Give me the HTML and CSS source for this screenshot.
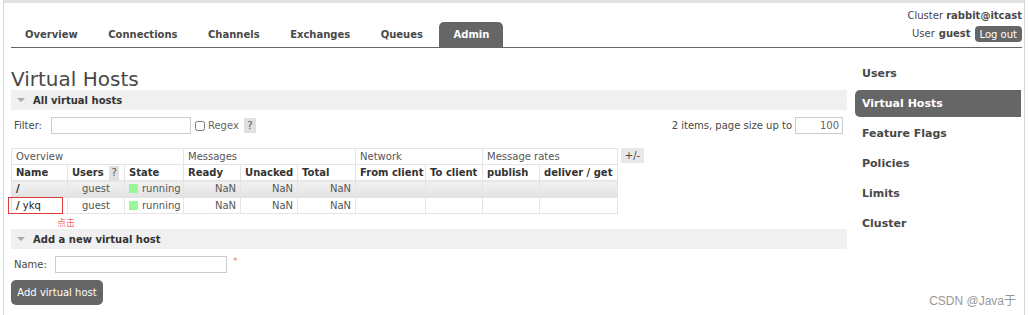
FILE: index.html
```html
<!DOCTYPE html>
<html lang="en">
<head>
    <meta charset="UTF-8">
    <title>RabbitMQ Management - Virtual Hosts</title>
    <link rel="stylesheet" href="styles.css">
</head>
<body>
    <div class="frame">
        <div class="header">
            <ul class="tabs">
                <li><a href="#">Overview</a></li>
                <li><a href="#">Connections</a></li>
                <li><a href="#">Channels</a></li>
                <li><a href="#">Exchanges</a></li>
                <li><a href="#">Queues</a></li>
                <li class="selected"><a href="#">Admin</a></li>
            </ul>
            <div class="login">
                <p>Cluster <b>rabbit@itcast</b></p>
                <p class="user">User <b>guest</b> <button class="logout">Log out</button></p>
            </div>
        </div>

        <div class="main">
            <div class="content">
                <h1>Virtual Hosts</h1>

                <div class="section">
                    <h2><span class="arrow"></span>All virtual hosts</h2>
                    <div class="filter-row">
                        <label class="filter-label">Filter:</label>
                        <input type="text" class="filter-input">
                        <input type="checkbox" class="regex-box">
                        <span class="regex-label">Regex</span>
                        <span class="help">?</span>
                        <span class="spacer"></span>
                        <span class="page-info">2 items, page size up to</span>
                        <input type="text" class="page-size" value="100">
                    </div>

                    <div class="table-wrap">
                        <table class="list">
                            <colgroup>
                                <col class="c-name"><col class="c-users"><col class="c-state">
                                <col class="c-ready"><col class="c-unacked"><col class="c-total">
                                <col class="c-from"><col class="c-to">
                                <col class="c-publish"><col class="c-deliver">
                            </colgroup>
                            <thead>
                                <tr class="group">
                                    <th colspan="3">Overview</th>
                                    <th colspan="3">Messages</th>
                                    <th colspan="2">Network</th>
                                    <th colspan="2">Message rates</th>
                                </tr>
                                <tr class="cols">
                                    <th>Name</th>
                                    <th>Users <span class="help">?</span></th>
                                    <th>State</th>
                                    <th>Ready</th>
                                    <th>Unacked</th>
                                    <th>Total</th>
                                    <th>From client</th>
                                    <th>To client</th>
                                    <th>publish</th>
                                    <th>deliver / get</th>
                                </tr>
                            </thead>
                            <tbody>
                                <tr class="alt">
                                    <td class="name"><b>/</b></td>
                                    <td class="c">guest</td>
                                    <td><span class="dot"></span>running</td>
                                    <td class="r">NaN</td>
                                    <td class="r">NaN</td>
                                    <td class="r">NaN</td>
                                    <td></td><td></td><td></td><td></td>
                                </tr>
                                <tr>
                                    <td class="name"><b>/</b> ykq</td>
                                    <td class="c">guest</td>
                                    <td><span class="dot"></span>running</td>
                                    <td class="r">NaN</td>
                                    <td class="r">NaN</td>
                                    <td class="r">NaN</td>
                                    <td></td><td></td><td></td><td></td>
                                </tr>
                            </tbody>
                        </table>
                        <span class="toggle">+/-</span>
                        <span class="mark-box"></span>
                        <span class="mark-text">点击</span>
                    </div>
                </div>

                <div class="section add">
                    <h2><span class="arrow"></span>Add a new virtual host</h2>
                    <div class="name-row">
                        <label class="filter-label">Name:</label>
                        <input type="text" class="name-input">
                        <span class="req">*</span>
                    </div>
                    <button class="add-btn">Add virtual host</button>
                </div>
            </div>

            <ul class="sidebar">
                <li><a href="#">Users</a></li>
                <li class="selected"><a href="#">Virtual Hosts</a></li>
                <li><a href="#">Feature Flags</a></li>
                <li><a href="#">Policies</a></li>
                <li><a href="#">Limits</a></li>
                <li><a href="#">Cluster</a></li>
            </ul>
        </div>

        <div class="watermark">CSDN @Java于</div>
    </div>
</body>
</html>
```

FILE: styles.css
```css
body {
    margin: 0;
    font-family: "DejaVu Sans", Verdana, sans-serif;
    font-size: 10px;
    color: #484848;
    background: white;
    overflow: hidden;
}
.frame {
    position: relative;
    margin-left: 3px;
    width: 1020px;
    height: 312px;
    border-top: 3px solid #e0e0e0;
    border-left: 1px solid #d4d4d4;
    border-right: 1px solid #d4d4d4;
}
.header {
    display: flex;
    justify-content: space-between;
    align-items: flex-end;
    margin: 0 2px 0 7px;
    padding-top: 6px;
    border-bottom: 1px solid #666;
}
.tabs {
    display: flex;
    gap: 3px;
    margin: 0;
    padding: 0;
    list-style: none;
}
.tabs a {
    display: block;
    padding: 0 13.5px 0 14px;
    height: 25px;
    line-height: 26px;
    font-weight: bold;
    color: #484848;
    text-decoration: none;
    border-radius: 5px 5px 0 0;
}
.tabs .selected a {
    background: #666;
    color: white;
}
.login {
    text-align: right;
    margin-bottom: 5px;
}
.login p {
    margin: 0;
    line-height: 14px;
}
.login .user {
    display: flex;
    justify-content: flex-end;
    align-items: center;
    gap: 4px;
    margin-top: 3px;
}
.logout {
    height: 16px;
    padding: 0 5px;
    border: none;
    border-radius: 4px;
    background: #666;
    color: white;
    font-family: inherit;
    font-size: 10px;
}
.main {
    display: flex;
    gap: 8px;
    margin: 0 2px 0 7px;
}
.content {
    width: 836px;
}
h1 {
    margin: 20px 0 0;
    font-size: 20px;
    font-weight: normal;
    line-height: 22px;
    color: #484848;
}
h2 {
    display: flex;
    align-items: center;
    margin: 0;
    height: 20px;
    background: #f0f0f0;
    font-size: 10px;
    font-weight: bold;
    color: #333;
}
.arrow {
    width: 0;
    height: 0;
    margin: 0 8px 0 6px;
    border-left: 4px solid transparent;
    border-right: 4px solid transparent;
    border-top: 4px solid #aaa;
}
.filter-row, .name-row {
    display: flex;
    align-items: center;
    margin-top: 7px;
    height: 17px;
}
.filter-label {
    padding-left: 3px;
}
input[type=text] {
    box-sizing: border-box;
    height: 17px;
    border: 1px solid #ccc;
    padding: 0 3px;
    font-family: inherit;
    font-size: 10px;
    color: #666;
}
.filter-input {
    width: 140px;
    margin-left: 9px;
}
.regex-box {
    width: 10px;
    height: 10px;
    margin: 0 0 0 4px;
}
.regex-label {
    margin-left: 3px;
    color: #666;
}
.help {
    display: inline-block;
    width: 12px;
    height: 15px;
    line-height: 15px;
    text-align: center;
    background: #e0e0e0;
    color: #555;
    font-weight: normal;
}
.filter-row .help {
    margin-left: 5px;
}
.spacer {
    flex: 1;
}
.page-info {
    margin-right: 3px;
}
.page-size {
    width: 48px;
    margin-right: 4px;
    text-align: right;
}
.table-wrap {
    position: relative;
    margin-top: 14px;
}
.list {
    width: 606px;
    table-layout: fixed;
    border-collapse: collapse;
    border: 1px solid #e4e4e4;
}
.c-name { width: 56px; }
.c-users { width: 57px; }
.c-state { width: 59px; }
.c-ready { width: 57px; }
.c-unacked { width: 57px; }
.c-total { width: 58px; }
.c-from { width: 70px; }
.c-to { width: 57px; }
.c-publish { width: 57px; }
.c-deliver { width: 78px; }
.list th, .list td {
    padding: 0 4px;
    border-left: 1px solid #e4e4e4;
    white-space: nowrap;
    overflow: hidden;
    text-align: left;
    line-height: 14px;
}
.list .group th {
    height: 15px;
    font-weight: normal;
    color: #555;
    border-bottom: 1px solid #e4e4e4;
}
.list .cols th {
    height: 15px;
    font-weight: bold;
    color: #333;
}
.list .cols .help {
    height: 14px;
    line-height: 14px;
    width: 10px;
    margin-left: 2px;
    vertical-align: top;
}
.list td {
    height: 15px;
    color: #555;
}
.list tbody tr {
    border-top: 1px solid #e4e4e4;
}
.list tr.alt td {
    height: 16px;
    background: linear-gradient(#f2f2f2, #e2e2e2);
}
.list td.name {
    color: #222;
}
.list td.c { text-align: center; }
.list td.r { text-align: right; }
.dot {
    display: inline-block;
    width: 9px;
    height: 9px;
    margin-right: 4px;
    vertical-align: -1px;
    background: #98f898;
}
.toggle {
    position: absolute;
    left: 610px;
    top: 0;
    width: 23px;
    height: 15px;
    line-height: 15px;
    text-align: center;
    background: #e8e8e8;
    color: #444;
}
.mark-box {
    position: absolute;
    left: -3px;
    top: 49px;
    width: 53px;
    height: 15px;
    border: 1px solid #e03a3a;
}
.mark-text {
    position: absolute;
    left: 46px;
    top: 69px;
    font-family: "Noto Sans CJK SC", sans-serif;
    font-size: 9px;
    line-height: 11px;
    color: #f27070;
}
.add {
    margin-top: 15px;
}
.name-input {
    width: 172px;
    margin-left: 8px;
}
.req {
    align-self: flex-start;
    margin-left: 6px;
    font-size: 9px;
    line-height: 10px;
    color: #f06a6a;
}
.add-btn {
    display: block;
    margin-top: 7px;
    width: 92px;
    height: 25px;
    padding: 0;
    border: none;
    border-radius: 5px;
    background: #666;
    color: white;
    font-family: inherit;
    font-size: 10px;
    white-space: nowrap;
}
.sidebar {
    width: 166px;
    margin: 12px 0 0;
    padding: 0;
    list-style: none;
}
.sidebar li {
    margin-bottom: 3px;
}
.sidebar a {
    display: block;
    height: 27px;
    line-height: 27px;
    padding: 0 7px;
    font-size: 11px;
    font-weight: bold;
    color: #484848;
    text-decoration: none;
    border-radius: 5px 0 0 5px;
}
.sidebar .selected a {
    background: #666;
    color: white;
}
.watermark {
    position: absolute;
    right: 8px;
    bottom: 7px;
    font-family: "Liberation Sans", "Noto Sans CJK SC", sans-serif;
    font-size: 12px;
    color: #999;
}
```
